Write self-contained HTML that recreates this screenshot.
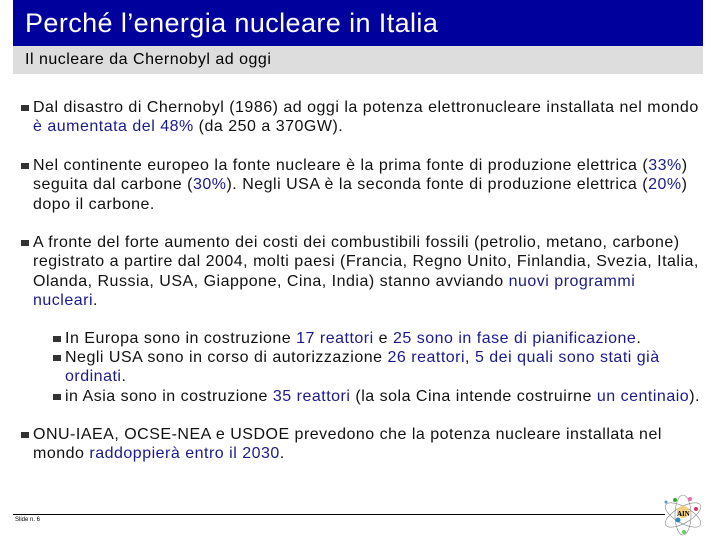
<!DOCTYPE html>
<html><head><style>
body{margin:0;width:720px;height:540px;background:#fff;position:relative;font-family:"Liberation Sans",sans-serif;overflow:hidden}
.t{position:absolute;left:13px;top:0;width:690px;height:46px;background:#00009c;color:#fff;font-size:27px;letter-spacing:.4px;line-height:46px;padding-left:12px;box-sizing:border-box}
.s{position:absolute;left:13px;top:46px;width:690px;height:28px;background:#ddd;color:#000;font-size:16px;letter-spacing:.5px;line-height:28px;padding-left:12px;box-sizing:border-box}
.p{position:absolute;left:33px;width:690px;font-size:16px;letter-spacing:.5px;line-height:19.3px;color:#111;white-space:nowrap}
.p:before{content:"";position:absolute;left:-12px;top:7px;width:8px;height:6px;background:#333}
.q{left:65px}
.b{color:#1a1a8c}
.line{position:absolute;left:13px;top:514px;width:652px;height:1px;background:#000}
.f{position:absolute;left:15px;top:517px;font-size:6px}
</style></head><body>
<div class="t">Perché l’energia nucleare in Italia</div>
<div class="s">Il nucleare da Chernobyl ad oggi</div>
<div class="p" style="top:98px">Dal disastro di Chernobyl (1986) ad oggi la potenza elettronucleare installata nel mondo<br><span class="b">è aumentata del 48%</span> (da 250 a 370GW).</div>
<div class="p" style="top:156px">Nel continente europeo la fonte nucleare è la prima fonte di produzione elettrica (<span class="b">33%</span>)<br>seguita dal carbone (<span class="b">30%</span>). Negli USA è la seconda fonte di produzione elettrica (<span class="b">20%</span>)<br>dopo il carbone.</div>
<div class="p" style="top:233px">A fronte del forte aumento dei costi dei combustibili fossili (petrolio, metano, carbone)<br>registrato a partire dal 2004, molti paesi (Francia, Regno Unito, Finlandia, Svezia, Italia,<br>Olanda, Russia, USA, Giappone, Cina, India) stanno avviando <span class="b">nuovi programmi<br>nucleari</span>.</div>
<div class="p q" style="top:329px">In Europa sono in costruzione <span class="b">17 reattori</span> e <span class="b">25 sono in fase di pianificazione</span>.</div>
<div class="p q" style="top:348px">Negli USA sono in corso di autorizzazione <span class="b">26 reattori</span>, <span class="b">5 dei quali sono stati già<br>ordinati</span>.</div>
<div class="p q" style="top:387px">in Asia sono in costruzione <span class="b">35 reattori</span> (la sola Cina intende costruirne <span class="b">un centinaio</span>).</div>
<div class="p" style="top:425px">ONU-IAEA, OCSE-NEA e USDOE prevedono che la potenza nucleare installata nel<br>mondo <span class="b">raddoppierà entro il 2030</span>.</div>
<div class="line"></div>
<div class="f">Slide n. 6</div>
<svg style="position:absolute;left:658px;top:492px" width="50" height="46" viewBox="0 0 50 46">
<ellipse cx="25" cy="23" rx="20" ry="8" fill="none" stroke="#888" stroke-width=".6" transform="rotate(30 25 23)"/>
<ellipse cx="25" cy="23" rx="20" ry="8" fill="none" stroke="#888" stroke-width=".6" transform="rotate(-30 25 23)"/>
<ellipse cx="25" cy="23" rx="8" ry="20" fill="none" stroke="#888" stroke-width=".6"/>
<circle cx="25" cy="20" r="6" fill="#f4d27a"/>
<circle cx="17" cy="8" r="2" fill="#3a3"/><circle cx="32" cy="7" r="2" fill="#e6a"/><circle cx="38" cy="17" r="2" fill="#c36"/>
<circle cx="20" cy="28" r="2.5" fill="#38b"/><circle cx="26" cy="40" r="2" fill="#6c6"/><circle cx="8" cy="10" r="1.5" fill="#59c"/>
<text x="19" y="24" font-size="7" font-family="Liberation Serif" font-weight="bold">AIN</text>
</svg>
</body></html>
